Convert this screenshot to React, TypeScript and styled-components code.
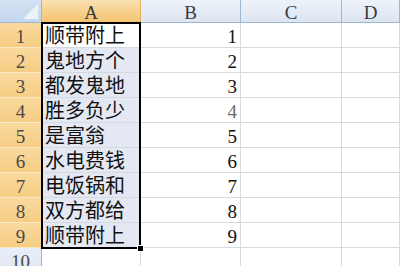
import styled, { createGlobalStyle } from "styled-components";

const GlobalStyle = createGlobalStyle`
  html, body {
    margin: 0;
    padding: 0;
    background: #ffffff;
    overflow: hidden;
  }
`;

const gridLine = "#d5d9e0";
const headBorder = "#9eb6ce";

const Sheet = styled.div`
  display: grid;
  grid-template-columns: 42px 99px 100px 101px 1fr;
  grid-template-rows: 23px repeat(10, 25px);
  width: 400px;
  height: 266px;
  overflow: hidden;
  position: relative;
  background: #ffffff;
`;

const Corner = styled.div`
  grid-row: 1;
  grid-column: 1;
  box-sizing: border-box;
  border-right: 1px solid ${headBorder};
  border-bottom: 1px solid ${headBorder};
  background: linear-gradient(180deg, #d3e2f3 0%, #c4d7ee 100%);
  position: relative;
  overflow: hidden;
  &::after {
    content: "";
    position: absolute;
    right: 3px;
    bottom: 3px;
    width: 0;
    height: 0;
    border-left: 15px solid transparent;
    border-bottom: 15px solid #eef3fa;
  }
`;

const ColHead = styled.div<{ $col: number; $active?: boolean }>`
  grid-row: 1;
  grid-column: ${(p) => p.$col};
  box-sizing: border-box;
  border-right: 1px solid ${(p) => (p.$active ? "#e3b15a" : headBorder)};
  border-bottom: 1px solid ${(p) => (p.$active ? "#e0a946" : headBorder)};
  background: ${(p) =>
    p.$active
      ? "linear-gradient(180deg, #f9e2b2 0%, #f6d08c 55%, #f3c472 100%)"
      : "linear-gradient(180deg, #eef3fa 0%, #e4ebf5 55%, #dbe4f1 100%)"};
  display: flex;
  align-items: center;
  justify-content: center;
  font-family: "Liberation Serif", "Times New Roman", serif;
  font-size: 19px;
  line-height: 1;
  color: #3c3c3c;
  padding-top: 2px;
`;

const RowHead = styled.div<{ $row: number; $active?: boolean }>`
  grid-row: ${(p) => p.$row};
  grid-column: 1;
  box-sizing: border-box;
  border-right: 1px solid ${(p) => (p.$active ? "#e0a946" : headBorder)};
  border-bottom: 1px solid ${(p) => (p.$active ? "#fbe8c4" : "#c5d3e4")};
  background: ${(p) =>
    p.$active
      ? "linear-gradient(180deg, #f9d99e 0%, #f6cd84 100%)"
      : "linear-gradient(180deg, #e9eff8 0%, #e0e8f3 100%)"};
  display: flex;
  align-items: center;
  justify-content: center;
  font-family: "Liberation Serif", "Times New Roman", serif;
  font-size: 19px;
  line-height: 1;
  color: #4a4a4a;
  padding-top: 2px;
`;

const Cell = styled.div<{
  $row: number;
  $col: number;
  $selected?: boolean;
  $num?: boolean;
  $dim?: boolean;
}>`
  grid-row: ${(p) => p.$row};
  grid-column: ${(p) => p.$col};
  box-sizing: border-box;
  border-right: 1px solid ${gridLine};
  border-bottom: 1px solid ${gridLine};
  background: ${(p) => (p.$selected ? "#e3e8f3" : "#ffffff")};
  display: flex;
  align-items: center;
  justify-content: ${(p) => (p.$num ? "flex-end" : "flex-start")};
  padding: ${(p) => (p.$num ? "2px 3px 0 0" : "0 0 0 3px")};
  font-family: ${(p) =>
    p.$num
      ? `"Liberation Serif", "Times New Roman", serif`
      : `"Noto Sans CJK SC", "Noto Sans", sans-serif`};
  font-size: ${(p) => (p.$num ? "19px" : "20px")};
  line-height: 1;
  color: ${(p) => (p.$dim ? "#6a6a6a" : "#111111")};
  white-space: nowrap;
`;

const Selection = styled.div`
  grid-column: 2;
  grid-row: 2 / span 9;
  margin: -1px 0 -1px -1px;
  border: 2px solid #000000;
  pointer-events: none;
  position: relative;
  z-index: 2;
`;

const FillHandle = styled.div`
  position: absolute;
  right: -5px;
  bottom: -5px;
  width: 5px;
  height: 5px;
  background: #000000;
  border: 1px solid #ffffff;
`;

const words = [
  "顺带附上",
  "鬼地方个",
  "都发鬼地",
  "胜多负少",
  "是富翁",
  "水电费钱",
  "电饭锅和",
  "双方都给",
  "顺带附上",
];

export default function App() {
  const rows = Array.from({ length: 10 }, (_, i) => i + 1);
  return (
    <>
      <GlobalStyle />
      <Sheet>
        <Corner />
        <ColHead $col={2} $active>A</ColHead>
        <ColHead $col={3}>B</ColHead>
        <ColHead $col={4}>C</ColHead>
        <ColHead $col={5}>D</ColHead>
        {rows.map((r) => {
          const inSel = r <= 9;
          const gr = r + 1;
          return [
            <RowHead key={`h${r}`} $row={gr} $active={inSel}>
              {r}
            </RowHead>,
            <Cell key={`a${r}`} $row={gr} $col={2} $selected={inSel && r > 1}>
              {inSel ? words[r - 1] : ""}
            </Cell>,
            <Cell key={`b${r}`} $row={gr} $col={3} $num $dim={r === 4}>
              {inSel ? r : ""}
            </Cell>,
            <Cell key={`c${r}`} $row={gr} $col={4} />,
            <Cell key={`d${r}`} $row={gr} $col={5} />,
          ];
        })}
        <Selection>
          <FillHandle />
        </Selection>
      </Sheet>
    </>
  );
}
